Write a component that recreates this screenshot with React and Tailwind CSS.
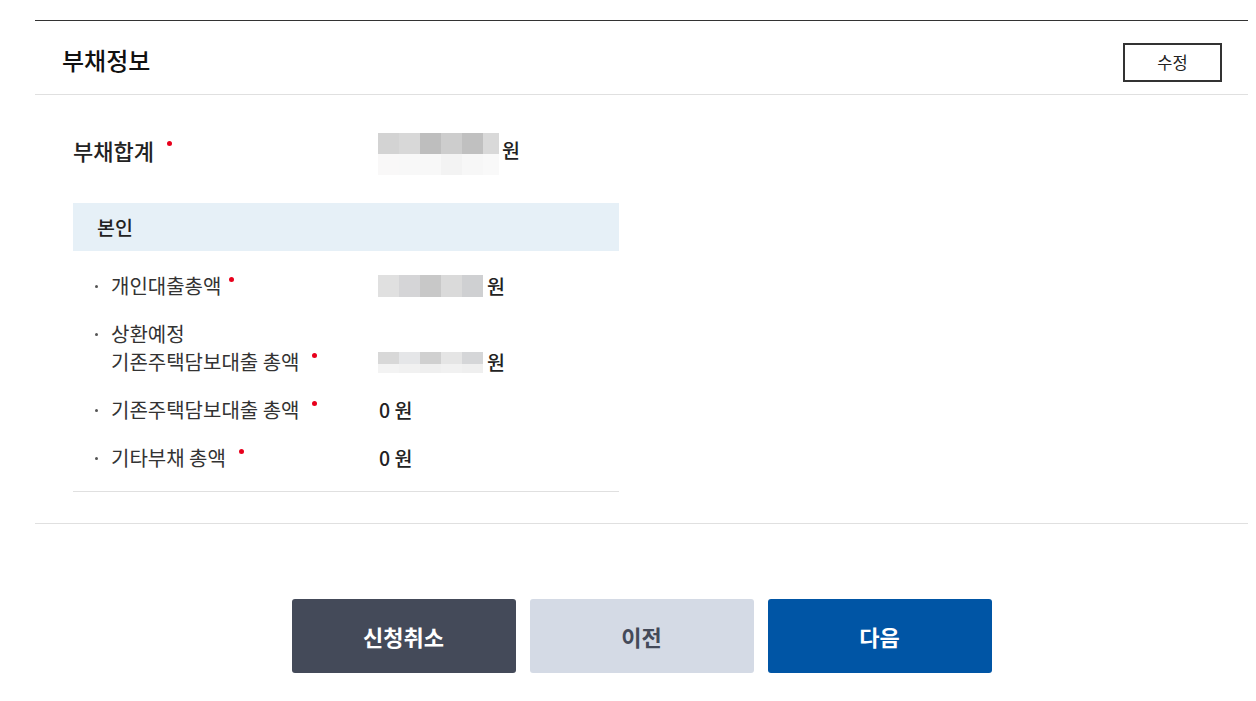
import React from "react";

const font = { fontFamily: '"Noto Sans CJK KR", "Noto Sans", sans-serif' };

const Dot = ({ className = "" }) => (
  <span className={`inline-block w-[5px] h-[5px] rounded-full bg-[#e8001c] ${className}`} />
);

// pixelated mask blocks for hidden amounts
const Blur = ({ top, bottom, last = 21, topH = 21, bottomH = 21 }) => (
  <div className="flex flex-col">
    <div className="flex">
      {top.map((c, i) => (
        <div
          key={i}
          style={{ background: c, width: i === top.length - 1 ? last : 21, height: topH }}
        />
      ))}
    </div>
    {bottom && (
      <div className="flex">
        {bottom.map((c, i) => (
          <div
            key={i}
            style={{ background: c, width: i === bottom.length - 1 ? last : 21, height: bottomH }}
          />
        ))}
      </div>
    )}
  </div>
);

const Item = ({ lines, dotGap = "ml-[13px]", value, alignEnd }) => (
  <div className={`flex ${alignEnd ? "items-end" : "items-start"}`}>
    <div className="w-[305px] flex items-start pl-[22px] shrink-0">
      <span className="w-[16px] h-[28px] flex items-center">
        <span className="w-[3px] h-[3px] rounded-full bg-[#555]" />
      </span>
      <div className="flex flex-col">
        {lines.map((l, i) => (
          <div key={i} className="flex items-start">
            <span className="text-[20px] leading-[28px] text-[#333]">{l}</span>
            {i === lines.length - 1 && <Dot className={`${dotGap} mt-[5px]`} />}
          </div>
        ))}
      </div>
    </div>
    <div className="h-[28px] flex items-center">{value}</div>
  </div>
);

const Won = () => <span className="text-[19.5px] font-medium text-[#222]">원</span>;

const Zero = () => (
  <span className="text-[19.5px] font-medium text-[#222] ml-[1px]">0 원</span>
);

export default function App() {
  return (
    <div className="bg-white w-[1256px] h-[701px] pt-5 pl-[35px] pr-[8px]" style={font}>
      <div className="border-t border-[#333]">
        <div className="h-[74px] flex items-start justify-between pl-[27px] pr-[26px] border-b border-[#e0e0e0]">
          <h2 className="text-[24px] font-medium text-[#111] leading-[36px] mt-[21px]">부채정보</h2>
          <button className="w-[99px] h-[39px] mt-[22px] border-2 border-[#333] text-[16.5px] text-[#222] bg-white">
            수정
          </button>
        </div>

        <div className="pl-[38px]">
          <div className="flex mt-[38px]">
            <div className="w-[305px] flex items-start shrink-0">
              <span className="text-[22px] font-medium leading-[34px] text-[#222]">부채합계</span>
              <Dot className="ml-[13px] mt-[8px]" />
            </div>
            <div className="flex items-start">
              <Blur
                top={["#d3d3d3", "#d8d8d8", "#bebebe", "#cdcdcd", "#c0c0c0", "#d9d9d9"]}
                bottom={["#f9f8f8", "#f8f8f8", "#f8f8f8", "#f3f3f3", "#f7f7f7", "#f9f9f9"]}
                last={16}
              />
              <span className="ml-[3px] leading-[34px]">
                <Won />
              </span>
            </div>
          </div>

          <div className="w-[546px] mt-[28px]">
            <div className="h-[48px] bg-[#e6f0f7] flex items-center pl-[24px]">
              <span className="text-[19.5px] font-medium text-[#222]">본인</span>
            </div>
            <div className="flex flex-col gap-[20px] pt-[21px] pb-[19px] border-b border-[#e0e0e0]">
              <Item
                lines={["개인대출총액"]}
                dotGap="ml-[8px]"
                value={
                  <div className="flex items-center">
                    <Blur
                      top={["#e0e0e0", "#d5d5d7", "#c8c8c8", "#dadada", "#cfd0d2"]}
                      topH={22}
                    />
                    <span className="ml-[4px]">
                      <Won />
                    </span>
                  </div>
                }
              />
              <Item
                alignEnd
                lines={["상환예정", "기존주택담보대출 총액"]}
                value={
                  <div className="flex items-center">
                    <Blur
                      top={["#d8d8d8", "#e5e6e8", "#d0d0d0", "#e5e5e5", "#d5d6d8"]}
                      bottom={["#f3f3f3", "#f1f1f1", "#efefef", "#f1f1f1", "#efefef"]}
                      topH={12}
                      bottomH={9}
                    />
                    <span className="ml-[4px]">
                      <Won />
                    </span>
                  </div>
                }
              />
              <Item lines={["기존주택담보대출 총액"]} value={<Zero />} />
              <Item lines={["기타부채 총액"]} value={<Zero />} />
            </div>
          </div>
        </div>

        <div className="border-b border-[#e0e0e0] mt-[31px]" />

        <div className="flex justify-center gap-[14px] mt-[75px]">
          <button className="w-[224px] h-[74px] rounded-[3px] bg-[#444a59] text-white text-[22px] font-bold">
            신청취소
          </button>
          <button className="w-[224px] h-[74px] rounded-[3px] bg-[#d4dae5] text-[#444a59] text-[22px] font-bold">
            이전
          </button>
          <button className="w-[224px] h-[74px] rounded-[3px] bg-[#0055a5] text-white text-[22px] font-bold">
            다음
          </button>
        </div>
      </div>
    </div>
  );
}
